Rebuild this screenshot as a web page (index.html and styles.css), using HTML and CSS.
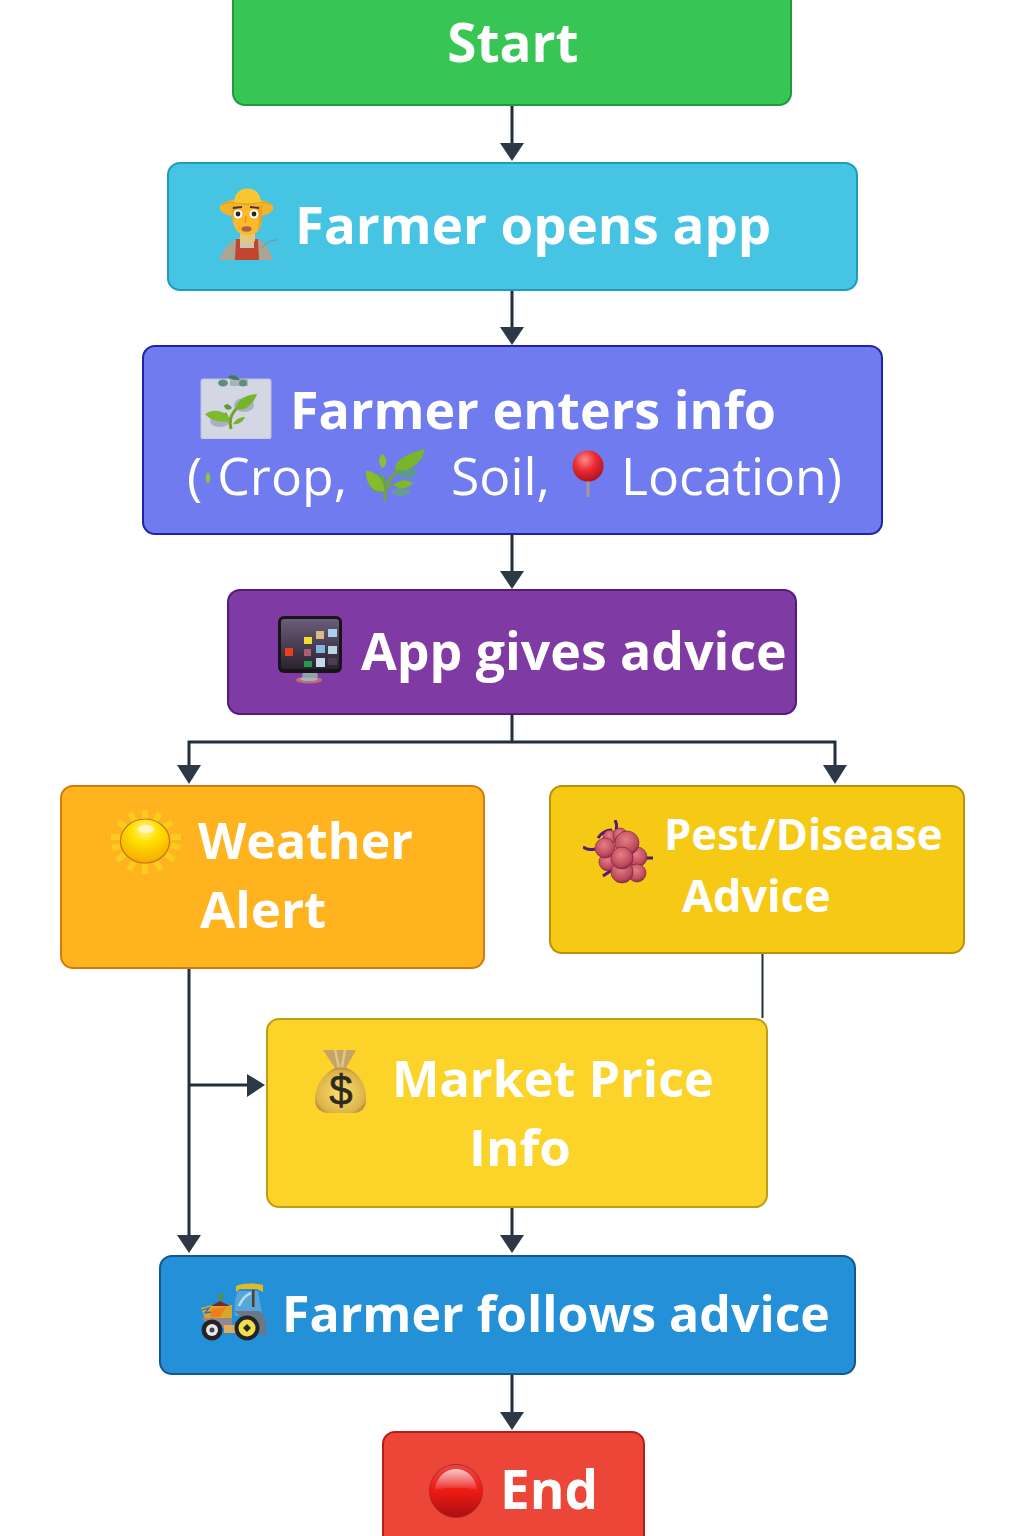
FILE: index.html
```html
<!DOCTYPE html>
<html lang="en">
<head>
  <meta charset="UTF-8" />
  <meta name="viewport" content="width=device-width, initial-scale=1.0"/>
  <title>Farmer App Flowchart</title>
  <link rel="stylesheet" href="styles.css">
</head>
<body>

<div class="canvas">

  <!-- connectors -->
  <svg class="wires" width="1024" height="1536" viewBox="0 0 1024 1536">
    <g class="wire">
      <path d="M512 105V145"/>
      <path d="M512 291V329"/>
      <path d="M512 535V573"/>
      <path d="M512 715V742"/>
      <path d="M189 769V742H835V769"/>
      <path d="M189 969V1237"/>
      <path d="M190 1085H249"/>
      <path d="M512 1208V1237"/>
      <path d="M512 1375V1414"/>
    </g>
    <path class="wire-thin" d="M762.500 954V1018"/>
    <g class="head">
      <polygon points="500,143 524,143 512,161"/>
      <polygon points="500,327 524,327 512,345"/>
      <polygon points="500,571 524,571 512,589"/>
      <polygon points="177,765 201,765 189,784"/>
      <polygon points="823,765 847,765 835,784"/>
      <polygon points="247,1074 247,1097 265,1085"/>
      <polygon points="177,1235 201,1235 189,1253"/>
      <polygon points="500,1235 524,1235 512,1253"/>
      <polygon points="500,1412 524,1412 512,1430"/>
    </g>
  </svg>

  <div class="node start"><span class="label">Start</span></div>

  <div class="node opens">
    <div class="row">
      <svg class="icon" width="75" height="85" viewBox="0 0 75 85">
        <path d="M9 78C13 68 19 60 27 57H48C55 60 60 68 63 78Z" fill="#a9a794"/>
        <path d="M52 66C56 61 60 58 67 58" fill="none" stroke="#8d8a76" stroke-width="1"/>
        <rect x="29" y="56" width="16" height="11" fill="#c9c7b4"/>
        <path d="M26 57H30V66H44V57H48L49 78H25Z" fill="#c2452d"/>
        <path d="M30 50H45V59C41 62 34 62 30 59Z" fill="#e9c77a"/>
        <ellipse cx="36.500" cy="26" rx="27" ry="9.500" fill="#f0b52a"/>
        <path d="M22 24H52C53 36 52 44 47 50C42 54 33 54 28 50C23 45 21 36 22 24Z" fill="#fdb92a"/>
        <path d="M22 24H27C25 30 24 34 24 40C22 36 21 30 22 24ZM47 24H52C53 34 52 42 48 48C49 40 49 32 47 24Z" fill="#e8a327"/>
        <path d="M24 20C25 10 31 6.500 37 6.500C44 6.500 50 10 51 20C52 24 44 22 37 22C30 22 23 24 24 20Z" fill="#f7c632"/>
        <path d="M12 23C20 18 24 22 37 22C50 22 54 18 61 23" fill="none" stroke="#d99c1f" stroke-width="1"/>
        <circle cx="28" cy="32" r="4.500" fill="#fff"/>
        <circle cx="44" cy="32" r="4.500" fill="#fff"/>
        <circle cx="28" cy="32" r="2.400" fill="#2a2420"/>
        <circle cx="44" cy="32" r="2.400" fill="#2a2420"/>
        <path d="M23 26L32 25M40 25L49 26" stroke="#4a3216" stroke-width="1.800" fill="none"/>
        <ellipse cx="36.500" cy="47" rx="5" ry="2.800" fill="#a8614c"/>
        <path d="M36 34L35 41" stroke="#d58b20" stroke-width="1" fill="none"/>
      </svg>
      <span class="label label-opens">Farmer opens app</span>
    </div>
  </div>

  <div class="node enters">
    <div class="row row-first">
      <svg class="icon icon-card" width="72" height="66" viewBox="0 0 72 66">
        <rect x="1" y="6" width="70" height="60" rx="2" fill="#d3d7e4" stroke="#bfc3d6"/>
        <ellipse cx="23" cy="10" rx="5" ry="3.500" fill="#5f8f7c"/>
        <rect x="30" y="6" width="18" height="7" fill="#aab2bd"/>
        <ellipse cx="43" cy="10" rx="4" ry="3.500" fill="#5f8f7c"/>
        <path d="M28 4C32 1 37 2 40 7C36 7 31 7 28 4Z" fill="#3f7d4a"/>
        <ellipse cx="44" cy="32" rx="10" ry="7" fill="#a8b0c4"/>
        <ellipse cx="20" cy="48" rx="10" ry="6" fill="#a8b0c4"/>
        <path d="M31 56C29 48 30 42 38 34" fill="none" stroke="#6fa32a" stroke-width="3"/>
        <path d="M31 50C28 47 27 43 25 40" fill="none" stroke="#6fa32a" stroke-width="2.500"/>
        <path d="M36 36C36 28 44 22 57 21C54 30 46 39 36 36Z" fill="#79b32b"/>
        <path d="M5 41C13 35 27 37 30 48C20 50 11 48 5 41Z" fill="#7dba2e"/>
        <path d="M33 51C36 46 40 44 45 44C43 49 38 52 33 51Z" fill="#79b32b"/>
        <path d="M24 33C26 30 30 31 32 35C29 38 25 37 24 33Z" fill="#5f9a33"/>
      </svg>
      <span class="label">Farmer enters info</span>
    </div>
    <div class="row row-second">
      <span class="label-light">(</span>
      <svg class="icon icon-sprout" width="6" height="14" viewBox="0 0 6 14">
        <path d="M3 1C6 4 6 9 3 13C0 9 0 4 3 1Z" fill="#8fc43c"/>
      </svg>
      <span class="label-light">Crop,</span>
      <svg class="icon icon-herb" width="60" height="54" viewBox="0 0 60 54">
        <ellipse cx="13" cy="34" rx="9" ry="10" fill="#5d9a86"/>
        <ellipse cx="36" cy="43" rx="9" ry="4" fill="#6a9c96"/>
        <ellipse cx="42" cy="24" rx="10" ry="5" fill="#5d9a8c"/>
        <path d="M20 52C18 40 24 26 38 18" fill="none" stroke="#73a62d" stroke-width="3"/>
        <path d="M22 38C26 36 30 35 34 35M18 27V34" fill="none" stroke="#73a62d" stroke-width="2"/>
        <path d="M30 20C30 10 46 3 60 0C58 12 44 26 30 20Z" fill="#79b52b"/>
        <path d="M1 22C10 22 20 30 19 42C8 44 0 34 1 22Z" fill="#86bb2d"/>
        <path d="M29 36C34 30 42 30 48 34C44 40 34 41 29 36Z" fill="#80b82c"/>
        <path d="M17 5C22 8 23 15 18 19C13 16 13 9 17 5Z" fill="#8cc030"/>
      </svg>
      <span class="label-light">Soil,</span>
      <svg class="icon icon-pin" width="36" height="48" viewBox="0 0 36 48">
        <defs>
          <radialGradient id="pinBall" cx="0.4" cy="0.3" r="0.7">
            <stop offset="0" stop-color="#ff8a86"/>
            <stop offset="0.5" stop-color="#ec2b32"/>
            <stop offset="1" stop-color="#b3131d"/>
          </radialGradient>
        </defs>
        <rect x="16.500" y="26" width="3" height="21" fill="#a49a96"/>
        <circle cx="18" cy="16" r="15.500" fill="url(#pinBall)"/>
      </svg>
      <span class="label-light">Location)</span>
    </div>
  </div>

  <div class="node gives">
    <div class="row">
      <svg class="icon" width="64" height="68" viewBox="0 0 64 68">
        <defs>
          <linearGradient id="screen" x1="0" y1="0" x2="0" y2="1">
            <stop offset="0" stop-color="#6b5c78"/>
            <stop offset="1" stop-color="#2b2230"/>
          </linearGradient>
        </defs>
        <path d="M25 54H39L40 63H24Z" fill="#8fa6ae"/>
        <ellipse cx="31" cy="64" rx="13" ry="3.500" fill="#c06a7a"/>
        <ellipse cx="31" cy="63" rx="9" ry="2" fill="#9fb6bc"/>
        <rect x="0" y="0" width="64" height="57" rx="6" fill="#17141b"/>
        <rect x="3" y="3" width="58" height="50" rx="3" fill="url(#screen)"/>
        <rect x="7" y="32" width="8" height="8" fill="#e8401c"/>
        <rect x="26" y="21" width="8" height="7" fill="#f2de2f"/>
        <rect x="26" y="33" width="7" height="7" fill="#a8606e"/>
        <rect x="26" y="45" width="8" height="6" fill="#1f9c4c"/>
        <rect x="38" y="15" width="8" height="8" fill="#d6bb85"/>
        <rect x="38" y="29" width="9" height="8" fill="#7fb6e4"/>
        <rect x="38" y="42" width="9" height="9" fill="#c7d8ee"/>
        <rect x="50" y="13" width="9" height="8" fill="#a6d2ee"/>
        <rect x="50" y="30" width="9" height="8" fill="#b9d6e2"/>
        <rect x="50" y="42" width="9" height="7" fill="#4a3e52"/>
      </svg>
      <span class="label label-gives">App gives advice</span>
    </div>
  </div>

  <div class="node weather">
    <svg class="icon icon-sun" width="72" height="66" viewBox="0 0 72 66">
      <defs>
        <radialGradient id="sunBall" cx="0.5" cy="0.25" r="0.8">
          <stop offset="0" stop-color="#fff3a0"/>
          <stop offset="0.35" stop-color="#ffe100"/>
          <stop offset="1" stop-color="#f5a500"/>
        </radialGradient>
      </defs>
      <g stroke="#f9cc1e" stroke-width="6">
        <path d="M35 1V10M20 4L25 12M50 4L45 12M8 13L16 18M62 13L54 18M1 28H10M71 28H61M2 39L10 37M70 39L61 36M7 51L15 45M64 51L56 45M19 61L24 53M51 61L46 53M35 65V55"/>
      </g>
      <ellipse cx="35" cy="32" rx="24.500" ry="22" fill="url(#sunBall)" stroke="#c9741a" stroke-width="1.200"/>
      <ellipse cx="36" cy="20" rx="8" ry="4" fill="#fff8cf" opacity="0.8"/>
    </svg>
    <div class="words">
      <span class="label">Weather</span>
      <span class="label weather-second">Alert</span>
    </div>
  </div>

  <div class="node pest">
    <svg class="icon icon-grapes" width="70" height="64" viewBox="0 0 70 64">
      <defs>
        <radialGradient id="berry" cx="0.45" cy="0.35" r="0.7">
          <stop offset="0" stop-color="#e57f86"/>
          <stop offset="0.7" stop-color="#bf4a5c"/>
          <stop offset="1" stop-color="#7c2346"/>
        </radialGradient>
      </defs>
      <path d="M32 0C34 4 34 7 33 10M15 18C19 12 24 10 29 10M0 27C4 30 8 30 12 29M20 56L29 50M60 38L70 38" fill="none" stroke="#4a1d78" stroke-width="3"/>
      <g fill="url(#berry)" stroke="#6d1f46" stroke-width="0.600">
        <circle cx="27" cy="17" r="7"/>
        <circle cx="37" cy="15" r="7"/>
        <circle cx="54" cy="37" r="10"/>
        <circle cx="54" cy="53" r="9"/>
        <circle cx="25" cy="42" r="9"/>
        <circle cx="22" cy="28" r="10"/>
        <circle cx="44" cy="23" r="12"/>
        <circle cx="39" cy="52" r="11"/>
        <circle cx="39" cy="38" r="11"/>
      </g>
    </svg>
    <div class="words">
      <span class="label">Pest/Disease</span>
      <span class="label pest-second">Advice</span>
    </div>
  </div>

  <div class="node market">
    <svg class="icon icon-bag" width="52" height="64" viewBox="0 0 52 64">
      <defs>
        <radialGradient id="bagFill" cx="0.5" cy="0.55" r="0.6">
          <stop offset="0" stop-color="#fbe36a"/>
          <stop offset="0.8" stop-color="#dcb24a"/>
          <stop offset="1" stop-color="#9c7a34"/>
        </radialGradient>
      </defs>
      <path d="M8 0H41L31 18H20Z" fill="#c6a464"/>
      <path d="M20 0L24 17M30 0L27 17" stroke="#e0c78e" stroke-width="2.500"/>
      <path d="M20 18H32C45 24 52 36 51 50C51 59 45 63 38 63H14C6 63 0 58 0 50C0 36 8 24 20 18Z" fill="url(#bagFill)"/>
      <text class="bag-sign" x="26" y="55">$</text>
    </svg>
    <div class="words">
      <span class="label label-market">Market Price</span>
      <span class="label market-second">Info</span>
    </div>
  </div>

  <div class="node follows">
    <div class="row">
      <svg class="icon" width="70" height="60" viewBox="0 0 70 60">
        <path d="M36 3C44 0 56 0 63 2V9L57 6H40L36 9Z" fill="#e8b81f"/>
        <path d="M38 8H58L62 30L35 33C34 23 35 15 38 8Z" fill="#56a6dc"/>
        <path d="M39 23C42 16 46 12 51 10" fill="none" stroke="#b4dcf2" stroke-width="2.500"/>
        <rect x="52" y="7" width="2.500" height="17" fill="#5c3a1c"/>
        <path d="M34 28H60L66 38V52H60C60 42 52 33 42 34Z" fill="#6b7782"/>
        <path d="M1 25L12 22H32V36H5Z" fill="#d6a828"/>
        <path d="M2 35H32V45H8Z" fill="#94878e"/>
        <path d="M11 23L20 18L30 23Z" fill="#7e2630"/>
        <path d="M12 26L26 24L20 34H10Z" fill="#ef7d1c"/>
        <path d="M2 27L9 25L5 30L11 29" fill="none" stroke="#2f6ad0" stroke-width="1.300"/>
        <path d="M21 18V14" stroke="#5f8f2e" stroke-width="2"/>
        <circle cx="21" cy="13" r="2.500" fill="#5f8f2e"/>
        <rect x="24" y="42" width="18" height="8" fill="#e0ad5a"/>
        <circle cx="12" cy="47" r="10.500" fill="#24232a"/>
        <circle cx="12" cy="47" r="6" fill="#e9e9e9"/>
        <circle cx="12" cy="47" r="2.500" fill="#44424c"/>
        <circle cx="47" cy="45" r="12.500" fill="#24232a"/>
        <circle cx="47" cy="45" r="8.500" fill="#f2e04a"/>
        <path d="M47 41L51 45L47 49L43 45Z" fill="#28262c"/>
      </svg>
      <span class="label">Farmer follows advice</span>
    </div>
  </div>

  <div class="node end">
    <div class="row">
      <svg class="icon icon-stop" width="54" height="54" viewBox="0 0 54 54">
        <defs>
          <linearGradient id="stopBall" x1="0" y1="0" x2="0" y2="1">
            <stop offset="0" stop-color="#e8494a"/>
            <stop offset="0.5" stop-color="#ee1a12"/>
            <stop offset="1" stop-color="#a70f10"/>
          </linearGradient>
          <linearGradient id="stopShine" x1="0" y1="0" x2="0" y2="1">
            <stop offset="0" stop-color="#fff" stop-opacity="0.7"/>
            <stop offset="1" stop-color="#fff" stop-opacity="0.05"/>
          </linearGradient>
        </defs>
        <circle cx="27" cy="27" r="26.500" fill="url(#stopBall)" stroke="#b8261f" stroke-width="1"/>
        <path d="M6 26C7 14 16 5 27 5C38 5 47 14 48 26C38 23 16 23 6 26Z" fill="url(#stopShine)"/>
      </svg>
      <span class="label label-end">End</span>
    </div>
  </div>

</div>

</body>
</html>
```

FILE: styles.css
```css
body {
  margin: 0;
  background: white;
  font-family: 'Open Sans', 'Liberation Sans', sans-serif;
}

.canvas {
  position: relative;
  width: 1024px;
  height: 1536px;
  overflow: hidden;
  background: white;
}

.wires {
  position: absolute;
  left: 0;
  top: 0;
}

.wire path {
  fill: none;
  stroke: #232f3c;
  stroke-width: 3;
}

.wire-thin {
  fill: none;
  stroke: #232f3c;
  stroke-width: 2;
}

.head polygon {
  fill: #2c3846;
}

/* boxes of the chart */
.node {
  position: absolute;
  box-sizing: border-box;
  display: flex;
  align-items: center;
  border: 2px solid;
  border-radius: 13px;
  color: white;
}

.start {
  left: 232px;
  top: -12px;
  width: 560px;
  height: 118px;
  justify-content: center;
  padding: 0 0 10px 2px;
  background: #37c553;
  border-color: #1f9a3d;
}

.opens {
  left: 167px;
  top: 162px;
  width: 691px;
  height: 129px;
  padding-left: 41px;
  background: #45c4e4;
  border-color: #1c9dbd;
}

.enters {
  left: 142px;
  top: 345px;
  width: 741px;
  height: 190px;
  flex-direction: column;
  align-items: flex-start;
  justify-content: flex-start;
  background: #6f7bee;
  border-color: #1e24a8;
}

.gives {
  left: 227px;
  top: 589px;
  width: 570px;
  height: 126px;
  padding-left: 49px;
  background: #7f3ba3;
  border-color: #4f1c80;
}

.weather {
  left: 60px;
  top: 785px;
  width: 425px;
  height: 184px;
  align-items: flex-start;
  padding-left: 48px;
  background: #ffb31f;
  border-color: #d07c0c;
}

.pest {
  left: 549px;
  top: 785px;
  width: 416px;
  height: 169px;
  align-items: flex-start;
  padding-left: 32px;
  background: #f6c915;
  border-color: #b8920c;
}

.market {
  left: 266px;
  top: 1018px;
  width: 502px;
  height: 190px;
  align-items: flex-start;
  padding-left: 47px;
  background: #fcd429;
  border-color: #bf9e14;
}

.follows {
  left: 159px;
  top: 1255px;
  width: 697px;
  height: 120px;
  padding-left: 39px;
  background: #2490d8;
  border-color: #14568f;
}

.end {
  left: 382px;
  top: 1431px;
  width: 263px;
  height: 118px;
  align-items: flex-start;
  padding-left: 45px;
  background: #ec4638;
  border-color: #b91c1c;
}

/* text and icons inside the boxes */
.row {
  display: flex;
  align-items: center;
  gap: 14px;
}

.icon {
  flex: none;
  display: block;
}

.label {
  font-size: 50px;
  font-weight: 700;
  line-height: 68px;
  white-space: nowrap;
}

.label-light {
  font-size: 51.700px;
  font-weight: 400;
  line-height: 66px;
  white-space: nowrap;
}

.start .label,
.label-end {
  font-size: 53px;
}

.label-opens {
  font-size: 52.800px;
}

.label-gives {
  font-size: 51.800px;
}

.enters .label {
  font-size: 52px;
}

.label-market {
  font-size: 50.300px;
}

.opens .row {
  gap: 10px;
  margin-top: -5px;
}

.row-first {
  margin: 28px 0 0 56px;
  gap: 18px;
}

.icon-card {
  margin-top: -7px;
}

.row-second {
  margin: -1px 0 0 43px;
  gap: 0;
}

.icon-sprout {
  margin: 6px 6px 0 3px;
}

.icon-herb {
  margin: 2px 26px 0 18px;
}

.icon-pin {
  margin: -2px 15px 0 20px;
}

.gives .row {
  gap: 19px;
  margin-top: -4px;
}

.words {
  display: flex;
  flex-direction: column;
  align-items: flex-start;
}

.icon-sun {
  margin: 22px 16px 0 0;
}

.weather .words {
  padding-top: 19px;
}

.weather-second {
  margin-left: 2px;
  font-size: 51px;
}

.icon-grapes {
  margin: 33px 11px 0 0;
}

.pest .words {
  padding-top: 15px;
}

.pest .label {
  font-size: 43.600px;
  line-height: 62px;
}

.pest .pest-second {
  margin-left: 18px;
  font-size: 45px;
}

.icon-bag {
  margin: 30px 25px 0 0;
}

.market .words {
  padding-top: 24px;
}

.market-second {
  margin-left: 77px;
  font-size: 51px;
}

.bag-sign {
  font-family: 'Liberation Sans', sans-serif;
  font-size: 42px;
  font-weight: 400;
  text-anchor: middle;
  fill: #2e2a22;
  stroke: #2e2a22;
  stroke-width: 0.600;
}

.follows .row {
  gap: 12px;
  margin-top: -4px;
}

.end .row {
  gap: 17px;
  margin-top: 22px;
}

.icon-stop {
  margin-top: 4px;
}
```
